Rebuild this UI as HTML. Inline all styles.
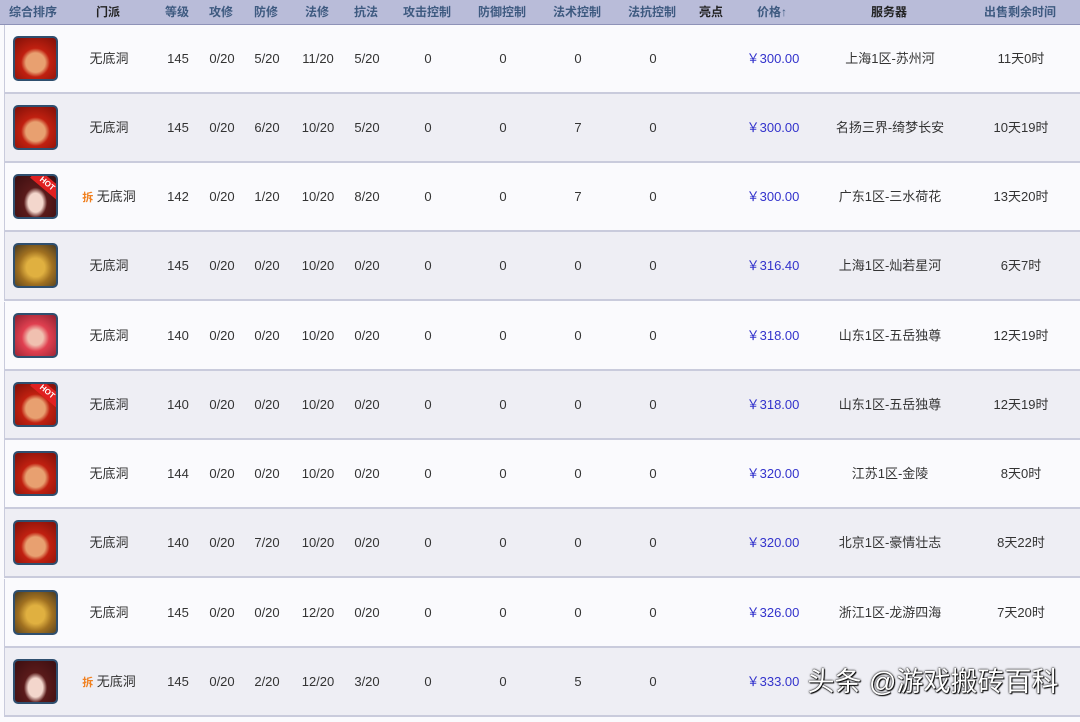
<!DOCTYPE html><html><head><meta charset="utf-8"><style>
*{margin:0;padding:0;box-sizing:border-box}
body{width:1080px;height:722px;overflow:hidden;background:#fafafd;font-family:"Liberation Sans","Noto Sans CJK SC",sans-serif;font-size:13px;color:#333;position:relative}
.hd{position:absolute;left:0;top:0;width:1080px;height:25px;background:#b9bcd9;border-bottom:1px solid #8e92b8}
.hd span{position:absolute;top:4px;line-height:16px;transform:translateX(-50%);font-weight:bold;font-size:12px;color:#3e5a80;white-space:nowrap}
.hd span.d{color:#222}
.r{position:absolute;left:4px;width:1076px;height:69px;border-bottom:2px solid #c9cbdc;border-left:1px solid #c9cbdc}
.r.g{background:#eeeef4}.r.w{background:#fafafd}
.r span{position:absolute;top:26px;line-height:16px;height:16px;transform:translateX(-50%);white-space:nowrap}
.p{color:#3333cc}
.av{position:absolute;left:8px;top:11px;width:45px;height:45px;border:2px solid #2f4f6f;border-radius:5px;overflow:hidden}
.red{background:radial-gradient(circle at 50% 60%,#e8a070 0 30%,#c02010 45%,#801008 100%)}
.girl{background:radial-gradient(ellipse at 50% 65%,#f3d6cc 0 25%,#5a1a1a 40%,#3a0e10 100%)}
.gold{background:radial-gradient(circle at 50% 55%,#e0b040 0 30%,#a07020 55%,#4a3a20 100%)}
.pink{background:radial-gradient(circle at 50% 55%,#f0c0b0 0 25%,#e04050 45%,#902030 100%)}
.hot{position:absolute;right:-8px;top:2px;width:34px;height:12px;background:#e02020;color:#fff;font-size:8px;font-weight:bold;text-align:center;line-height:12px;transform:rotate(40deg)}
.chai{color:#f08020;font-size:11px}
.wm{top:19px!important;line-height:30px!important;height:30px!important;font-size:27px;color:#fff;text-shadow:0 0 2px #000,0 0 1px #000,1px 1px 1px #000}
</style></head><body>
<div class="hd">
<span style="left:33px">综合排序</span><span class="d" style="left:108px">门派</span><span style="left:177px">等级</span><span style="left:221px">攻修</span><span style="left:266px">防修</span><span style="left:317px">法修</span><span style="left:366px">抗法</span><span style="left:427px">攻击控制</span><span style="left:502px">防御控制</span><span style="left:577px">法术控制</span><span style="left:652px">法抗控制</span><span class="d" style="left:711px">亮点</span><span style="left:772px">价格↑</span><span class="d" style="left:889px">服务器</span><span style="left:1020px">出售剩余时间</span>
</div>

<div class="r w" style="top:25px"><div class="av red"></div><span style="left:104px">无底洞</span><span style="left:173px">145</span><span style="left:217px">0/20</span><span style="left:262px">5/20</span><span style="left:313px">11/20</span><span style="left:362px">5/20</span><span style="left:423px">0</span><span style="left:498px">0</span><span style="left:573px">0</span><span style="left:648px">0</span><span class="p" style="left:768px">￥300.00</span><span style="left:885px">上海1区-苏州河</span><span style="left:1016px">11天0时</span></div>

<div class="r g" style="top:94px"><div class="av red"></div><span style="left:104px">无底洞</span><span style="left:173px">145</span><span style="left:217px">0/20</span><span style="left:262px">6/20</span><span style="left:313px">10/20</span><span style="left:362px">5/20</span><span style="left:423px">0</span><span style="left:498px">0</span><span style="left:573px">7</span><span style="left:648px">0</span><span class="p" style="left:768px">￥300.00</span><span style="left:885px">名扬三界-绮梦长安</span><span style="left:1016px">10天19时</span></div>

<div class="r w" style="top:163px"><div class="av girl"><div class="hot">HOT</div></div><span style="left:104px"><b class="chai">拆</b> 无底洞</span><span style="left:173px">142</span><span style="left:217px">0/20</span><span style="left:262px">1/20</span><span style="left:313px">10/20</span><span style="left:362px">8/20</span><span style="left:423px">0</span><span style="left:498px">0</span><span style="left:573px">7</span><span style="left:648px">0</span><span class="p" style="left:768px">￥300.00</span><span style="left:885px">广东1区-三水荷花</span><span style="left:1016px">13天20时</span></div>

<div class="r g" style="top:232px"><div class="av gold"></div><span style="left:104px">无底洞</span><span style="left:173px">145</span><span style="left:217px">0/20</span><span style="left:262px">0/20</span><span style="left:313px">10/20</span><span style="left:362px">0/20</span><span style="left:423px">0</span><span style="left:498px">0</span><span style="left:573px">0</span><span style="left:648px">0</span><span class="p" style="left:768px">￥316.40</span><span style="left:885px">上海1区-灿若星河</span><span style="left:1016px">6天7时</span></div>

<div class="r w" style="top:302px"><div class="av pink"></div><span style="left:104px">无底洞</span><span style="left:173px">140</span><span style="left:217px">0/20</span><span style="left:262px">0/20</span><span style="left:313px">10/20</span><span style="left:362px">0/20</span><span style="left:423px">0</span><span style="left:498px">0</span><span style="left:573px">0</span><span style="left:648px">0</span><span class="p" style="left:768px">￥318.00</span><span style="left:885px">山东1区-五岳独尊</span><span style="left:1016px">12天19时</span></div>

<div class="r g" style="top:371px"><div class="av red"><div class="hot">HOT</div></div><span style="left:104px">无底洞</span><span style="left:173px">140</span><span style="left:217px">0/20</span><span style="left:262px">0/20</span><span style="left:313px">10/20</span><span style="left:362px">0/20</span><span style="left:423px">0</span><span style="left:498px">0</span><span style="left:573px">0</span><span style="left:648px">0</span><span class="p" style="left:768px">￥318.00</span><span style="left:885px">山东1区-五岳独尊</span><span style="left:1016px">12天19时</span></div>

<div class="r w" style="top:440px"><div class="av red"></div><span style="left:104px">无底洞</span><span style="left:173px">144</span><span style="left:217px">0/20</span><span style="left:262px">0/20</span><span style="left:313px">10/20</span><span style="left:362px">0/20</span><span style="left:423px">0</span><span style="left:498px">0</span><span style="left:573px">0</span><span style="left:648px">0</span><span class="p" style="left:768px">￥320.00</span><span style="left:885px">江苏1区-金陵</span><span style="left:1016px">8天0时</span></div>

<div class="r g" style="top:509px"><div class="av red"></div><span style="left:104px">无底洞</span><span style="left:173px">140</span><span style="left:217px">0/20</span><span style="left:262px">7/20</span><span style="left:313px">10/20</span><span style="left:362px">0/20</span><span style="left:423px">0</span><span style="left:498px">0</span><span style="left:573px">0</span><span style="left:648px">0</span><span class="p" style="left:768px">￥320.00</span><span style="left:885px">北京1区-豪情壮志</span><span style="left:1016px">8天22时</span></div>

<div class="r w" style="top:579px"><div class="av gold"></div><span style="left:104px">无底洞</span><span style="left:173px">145</span><span style="left:217px">0/20</span><span style="left:262px">0/20</span><span style="left:313px">12/20</span><span style="left:362px">0/20</span><span style="left:423px">0</span><span style="left:498px">0</span><span style="left:573px">0</span><span style="left:648px">0</span><span class="p" style="left:768px">￥326.00</span><span style="left:885px">浙江1区-龙游四海</span><span style="left:1016px">7天20时</span></div>

<div class="r g" style="top:648px"><div class="av girl"></div><span style="left:104px"><b class="chai">拆</b> 无底洞</span><span style="left:173px">145</span><span style="left:217px">0/20</span><span style="left:262px">2/20</span><span style="left:313px">12/20</span><span style="left:362px">3/20</span><span style="left:423px">0</span><span style="left:498px">0</span><span style="left:573px">5</span><span style="left:648px">0</span><span class="p" style="left:768px">￥333.00</span>
<span class="wm" style="left:928px">头条 @游戏搬砖百科</span></div>
</body></html>
